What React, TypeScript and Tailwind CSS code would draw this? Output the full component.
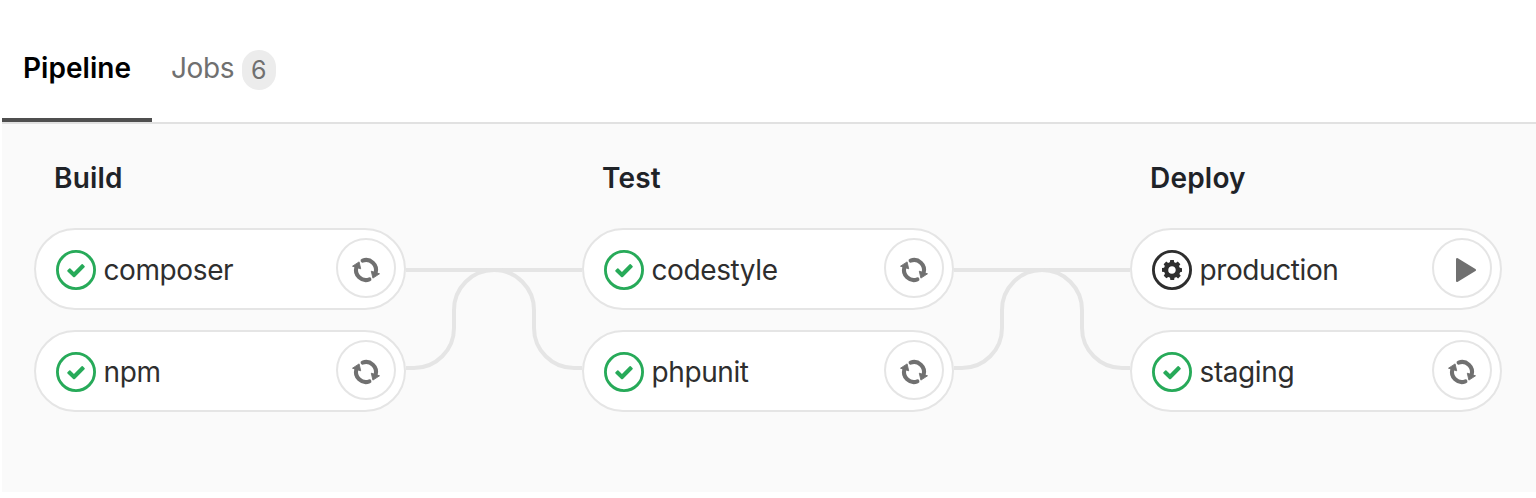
type Status = 'success' | 'manual';
type Job = { name: string; status: Status };

const stages: { title: string; jobs: Job[] }[] = [
  { title: 'Build', jobs: [{ name: 'composer', status: 'success' }, { name: 'npm', status: 'success' }] },
  { title: 'Test', jobs: [{ name: 'codestyle', status: 'success' }, { name: 'phpunit', status: 'success' }] },
  { title: 'Deploy', jobs: [{ name: 'production', status: 'manual' }, { name: 'staging', status: 'success' }] },
];

function StatusIcon({ status }: { status: Status }) {
  return (
    <svg viewBox="0 0 14 14" className={status === 'success' ? 'size-10 shrink-0 text-[#27aa59]' : 'size-10 shrink-0 text-[#2e2e2e]'}>
      <circle cx="7" cy="7" r="6.5" fill="none" stroke="currentColor" />
      {status === 'success' ? (
        <path
          fill="currentColor"
          d="M6.278 7.697L5.045 6.464a.296.296 0 0 0-.42-.002l-.613.614a.298.298 0 0 0 .002.42l1.91 1.909a.5.5 0 0 0 .703.005l.265-.265L9.997 6.04a.291.291 0 0 0-.009-.408l-.614-.614a.29.29 0 0 0-.408-.009L6.278 7.697z"
        />
      ) : (
        <path
          fill="currentColor"
          fillRule="evenodd"
          d="M10.5 7.63V6.37l-.787-.13c-.044-.175-.132-.349-.263-.61l.481-.652-.918-.913-.657.478a2.346 2.346 0 0 0-.612-.26L7.656 3.5H6.388l-.132.783c-.219.043-.394.13-.612.26l-.657-.478-.918.913.437.652c-.131.218-.175.392-.262.61l-.744.086v1.261l.787.13c.044.218.132.392.263.61l-.438.651.92.913.655-.434c.175.086.394.173.613.26l.131.783h1.313l.131-.783c.219-.043.394-.13.613-.26l.656.478.918-.913-.48-.652c.13-.218.218-.435.262-.61l.656-.13zM7 8.283a1.285 1.285 0 0 1-1.313-1.305c0-.739.57-1.304 1.313-1.304.744 0 1.313.565 1.313 1.304 0 .74-.57 1.305-1.313 1.305z"
        />
      )}
    </svg>
  );
}

function RetryIcon() {
  const half = (
    <>
      <path d="M12.6 6.6A10 10 0 0 1 25.6 18.8" fill="none" stroke="currentColor" strokeWidth="4.1" strokeLinecap="round" />
      <path d="M21.3 17.2L29.5 19.8L22.9 24.1Z" fill="currentColor" stroke="currentColor" strokeWidth="0.9" strokeLinejoin="round" />
    </>
  );
  return (
    <svg viewBox="0 0 32 32" className="mt-1 size-8">
      {half}
      <g transform="rotate(180 16 16)">{half}</g>
    </svg>
  );
}

function PlayIcon() {
  return (
    <svg viewBox="0 0 32 32" className="mt-1 ml-2 size-8">
      <path d="M7.2 5.2L24.8 16L7.2 26.8Z" fill="currentColor" stroke="currentColor" strokeWidth="2.4" strokeLinejoin="round" />
    </svg>
  );
}

function JobPill({ job }: { job: Job }) {
  return (
    <li className="flex h-[82px] items-start rounded-full border-2 border-[#e5e5e5] bg-white pt-2 pr-2 pl-5">
      <div className="mt-3 flex flex-1 items-center gap-[7.5px]">
        <StatusIcon status={job.status} />
        <span className="text-[28px] leading-10 tracking-[-0.4px] text-[#2e2e2e]">{job.name}</span>
      </div>
      <button aria-label={job.status === 'manual' ? 'Play' : 'Retry'} className="flex size-[60px] items-center justify-center rounded-full border-2 border-[#e5e5e5] bg-white text-[#707070]">
        {job.status === 'manual' ? <PlayIcon /> : <RetryIcon />}
      </button>
    </li>
  );
}

function Connector() {
  return (
    <svg viewBox="0 0 176 184" className="mt-[104px] h-[184px] w-[176px] shrink-0" fill="none" stroke="#e5e5e5" strokeWidth="4">
      <path d="M0 42H176" />
      <path d="M0 140H8A40 40 0 0 0 48 100V82A40 40 0 0 1 128 82V100A40 40 0 0 0 168 140H176" />
    </svg>
  );
}

export default function App() {
  return (
    <div className="h-[498px] w-[1536px] overflow-hidden bg-white pl-0.5 font-['Inter',sans-serif]">
      <nav className="flex h-[124px] border-b-2 border-[#e1e1e1]">
        <button className="flex h-[122px] w-[150px] justify-center border-b-4 border-[#4f4f4f] pt-12 text-[28px] leading-10 font-semibold tracking-[0.05px] text-black">
          Pipeline
        </button>
        <button className="flex pt-12 pl-[19px] text-[28px] leading-10 tracking-[-0.4px] text-[#707070]">
          Jobs
          <span className="mt-0.5 ml-[7.5px] flex h-10 w-[34px] items-center justify-center rounded-[17px] bg-[#ececec] text-[25px]">6</span>
        </button>
      </nav>
      <main className="flex h-[368px] bg-[#fafafa] pl-8">
        {stages.map((stage, i) => (
          <div key={stage.title} className="flex">
            {i > 0 && <Connector />}
            <section className="w-[372px] pt-[34px]">
              <h2 className="pl-5 text-[28px] leading-10 font-semibold tracking-[0.2px] text-[#1f2328]">{stage.title}</h2>
              <ul className="mt-[30px] flex flex-col gap-5">
                {stage.jobs.map((job) => (
                  <JobPill key={job.name} job={job} />
                ))}
              </ul>
            </section>
          </div>
        ))}
      </main>
    </div>
  );
}
